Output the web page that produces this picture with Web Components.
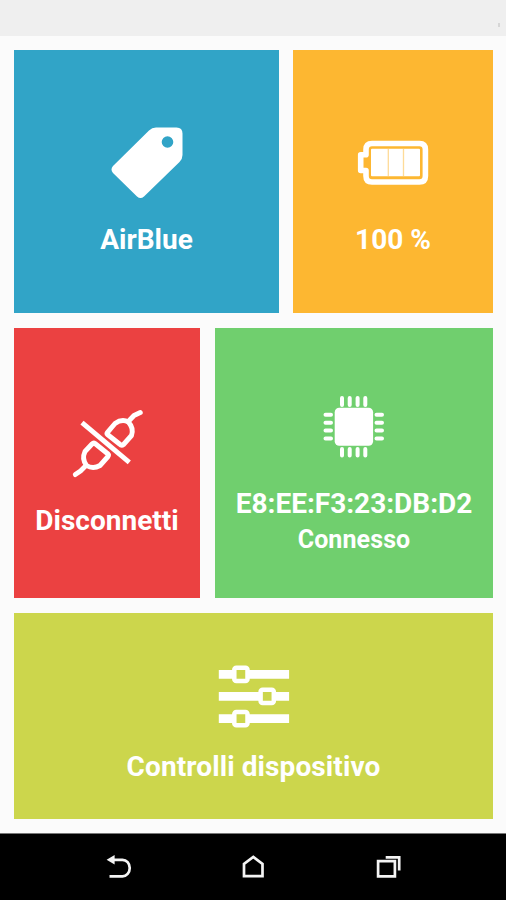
<!DOCTYPE html>
<html lang="it">
<head>
<meta charset="utf-8">
<title>AirBlue</title>
<style>
  body {
    margin: 0;
    background: #fbfbfb;
    font-family: Roboto, "Liberation Sans", sans-serif;
  }
</style>
</head>
<body>

<template id="screen">
  <style>
    :host {
      display: flex;
      flex-direction: column;
      height: 900px;
      overflow: hidden;
    }
    main {
      flex: 1;
      display: flex;
      flex-direction: column;
      gap: 15px;
      padding: 14px 13px 14px 14px;
      box-sizing: border-box;
    }
  </style>
  <status-bar></status-bar>
  <main><slot></slot></main>
  <nav-bar></nav-bar>
</template>

<template id="status">
  <style>
    :host {
      display: flex;
      justify-content: flex-end;
      align-items: flex-end;
      height: 36px;
      padding: 0 6px 9px 0;
      box-sizing: border-box;
      background: #efefef;
    }
    i {
      width: 2px;
      height: 4px;
      background: #d6d6d6;
    }
  </style>
  <i></i>
</template>

<template id="row">
  <style>
    :host {
      display: grid;
      grid-template-columns: var(--columns, 1fr);
      column-gap: var(--gap, 14px);
      height: var(--height);
    }
  </style>
  <slot></slot>
</template>

<template id="tile">
  <style>
    :host {
      display: flex;
      flex-direction: column;
      align-items: center;
      box-sizing: border-box;
      padding-top: var(--top);
      background: var(--color);
      color: #fff;
      font-weight: 700;
      white-space: nowrap;
    }
    .label {
      margin-top: var(--space, 25px);
      font-size: 28px;
      line-height: 32px;
      letter-spacing: var(--tracking, 0);
    }
    .state {
      margin-top: 5px;
      font-size: 25px;
      line-height: 30px;
      letter-spacing: .1px;
    }
  </style>
  <slot name="icon"></slot>
  <div class="label"><slot></slot></div>
  <div class="state"><slot name="state"></slot></div>
</template>

<template id="nav">
  <style>
    :host {
      display: flex;
      justify-content: center;
      align-items: center;
      gap: 102.5px;
      height: 67px;
      box-sizing: border-box;
      border-top: 1px solid #777;
      background: #000;
    }
    svg {
      width: 32px;
      height: 32px;
      fill: none;
      stroke: #f4f4f4;
      stroke-width: 2.7;
    }
  </style>
  <svg viewBox="0 0 32 32">
    <path d="M10 8.8h9.5a7.2 8.2 0 0 1 0 16.5H6.5"/>
    <path d="M3.6 8.8l8-4.8v9.4z" fill="#f4f4f4" stroke="none"/>
  </svg>
  <svg viewBox="0 0 32 32"><path d="M7 25.2V13L16.300 6l9.200 7v12.200z"/></svg>
  <svg viewBox="0 0 32 32"><path d="M6.1 10.2h16.8v15.2H6.1zM13.7 6.3h13.5v13.2"/></svg>
</template>

<template id="icon">
  <style>
    :host {
      display: block;
      width: 72px;
      height: 72px;
    }
    svg {
      display: block;
      overflow: visible;
      fill: #fff;
    }
  </style>
  <svg width="72" height="72" viewBox="0 0 72 72"></svg>
</template>

<app-screen>
  <tile-row style="--height: 263px; --columns: 265px 200px">
    <device-tile style="--color: #31a4c7; --top: 77px">
      <tile-icon slot="icon" name="tag"></tile-icon>AirBlue
    </device-tile>
    <device-tile style="--color: #fdb731; --top: 77px">
      <tile-icon slot="icon" name="battery"></tile-icon>100 %
    </device-tile>
  </tile-row>
  <tile-row style="--height: 270px; --columns: 186px 278px; --gap: 15px">
    <device-tile style="--color: #eb4141; --top: 80px">
      <tile-icon slot="icon" name="unplug"></tile-icon>Disconnetti
    </device-tile>
    <device-tile style="--color: #70cf6e; --top: 63px">
      <tile-icon slot="icon" name="chip"></tile-icon>E8:EE:F3:23:DB:D2<span slot="state">Connesso</span>
    </device-tile>
  </tile-row>
  <tile-row style="--height: 206px">
    <device-tile style="--color: #ccd64c; --top: 48px; --space: 18px; --tracking: .1px">
      <tile-icon slot="icon" name="sliders"></tile-icon>Controlli dispositivo
    </device-tile>
  </tile-row>
</app-screen>

<script>
  const icons = {
    tag: `<path fill-rule="evenodd" d="M45 .5H65.500Q71.500 .5 71.500 6.500V28Q71.500 32 68.500 35L33 69.500Q29.500 72.500 26 69.500L2 46Q-1 42.500 2 39L38 3.500Q41 .5 45 .5zM56.500 9.200a5.800 5.800 0 1 0 0 11.600a5.800 5.800 0 1 0 0-11.600z"/>`,
    battery: `
      <path fill="none" stroke="#fff" stroke-width="5.600" stroke-linejoin="round" d="M15 16.500H62.500Q68.400 16.500 68.400 22.500V49Q68.400 55 62.500 55H15Q9 55 9 49V43.500H3.700V27.700H9V22.500Q9 16.500 15 16.500z"/>
      <rect x="14" y="21.700" width="49" height="27.500" rx="1"/>
      <path stroke="#fdb731" stroke-opacity=".5" stroke-width="1.300" d="M31.300 22v27M46.500 22v27"/>`,
    unplug: `
      <g fill="none" stroke="#fff" stroke-width="4.900" stroke-linejoin="round">
        <path d="M11 14.700L58.300 54.300"/>
        <path d="M36.500 24.300L44 15.500Q51 10.500 57.300 14Q63 20 60.500 27.500L52.500 36.500Q50.500 38 48.500 36L36.500 26.500Q35.500 25.500 36.500 24.300z"/>
        <path d="M24 35.500L37 46Q38 47 37 48.500L29 57.500Q22 61.500 15.500 57.500Q10.500 51 14 43.500L21 36Q22.500 34.500 24 35.500z"/>
        <path stroke-linecap="round" d="M58 12.700L63 7.500L69.300 4.600M14 58.500L9.500 63L4.300 66.600"/>
      </g>`,
    chip: `
      <rect x="16.700" y="16.700" width="38.400" height="38.100" rx="4.500"/>
      <path stroke="#fff" stroke-width="4" stroke-linecap="round" d="M24 7v7M31.700 7v7M39.600 7v7M47.300 7v7M24 58v6.500M31.700 58v6.500M39.600 58v6.500M47.300 58v6.500M7.500 23.800H13M7.500 31.700H13M7.500 39.600H13M7.500 47.400H13M58.500 23.800H64M58.500 31.700H64M58.500 39.600H64M58.500 47.400H64"/>`,
    sliders: `
      <path d="M.8 9H71.100V17.700H.8zM.8 31H71.100V39.700H.8zM.8 53.200H71.100V61.900H.8z"/>
      <g fill="#ccd64c" stroke="#fff" stroke-width="4.500">
        <rect x="16.300" y="6.800" width="13.200" height="13.200" rx="2"/>
        <rect x="42.600" y="28.800" width="13.200" height="13.200" rx="2"/>
        <rect x="16.300" y="51" width="13.200" height="13.200" rx="2"/>
      </g>`
  };

  class Base extends HTMLElement {
    constructor() {
      super();

      this.shadow = this.attachShadow({ mode: 'open' });
      const content = document.getElementById(this.constructor.template).content.cloneNode(true);
      this.shadow.appendChild(content);
    }
  }

  class Screen extends Base {
    static template = 'screen';
  }

  class StatusBar extends Base {
    static template = 'status';
  }

  class TileRow extends Base {
    static template = 'row';
  }

  class DeviceTile extends Base {
    static template = 'tile';
  }

  class NavBar extends Base {
    static template = 'nav';
  }

  class TileIcon extends Base {
    static template = 'icon';

    connectedCallback() {
      this.shadow.querySelector('svg').innerHTML = icons[this.getAttribute('name')];
    }
  }

  customElements.define('status-bar', StatusBar);
  customElements.define('nav-bar', NavBar);
  customElements.define('tile-icon', TileIcon);
  customElements.define('device-tile', DeviceTile);
  customElements.define('tile-row', TileRow);
  customElements.define('app-screen', Screen);
</script>
</body>
</html>
